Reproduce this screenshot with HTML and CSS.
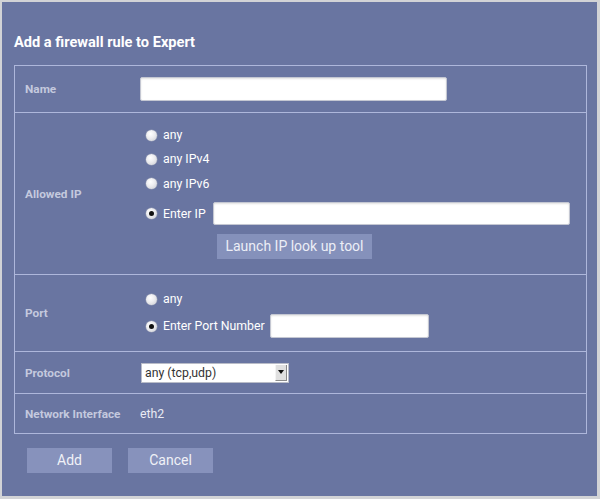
FILE: index.html
```html
<!DOCTYPE html>
<html>
<head>
<meta charset="utf-8">
<link rel="stylesheet" href="styles.css">
</head>
<body>
<div class="panel">
  <div class="title">Add a firewall rule to Expert</div>
  <div class="form">
    <div class="row row-name">
      <div class="label">Name</div>
      <div class="field"><input class="text name-input" type="text"></div>
    </div>
    <div class="row row-ip">
      <div class="label">Allowed IP</div>
      <div class="field col">
        <div class="opt h24 mt10"><span class="radio"></span><span class="opt-text">any</span></div>
        <div class="opt h24"><span class="radio"></span><span class="opt-text">any IPv4</span></div>
        <div class="opt h25"><span class="radio"></span><span class="opt-text">any IPv6</span></div>
        <div class="opt h23 mt6"><span class="radio on"></span><span class="opt-text">Enter IP</span><input class="text ip-input" type="text"></div>
        <div class="launch">Launch IP look up tool</div>
      </div>
    </div>
    <div class="row row-port">
      <div class="label">Port</div>
      <div class="field col">
        <div class="opt h24 mt12"><span class="radio"></span><span class="opt-text">any</span></div>
        <div class="opt h24 mt3"><span class="radio on"></span><span class="opt-text">Enter Port Number</span><input class="text port-input" type="text"></div>
      </div>
    </div>
    <div class="row row-proto">
      <div class="label">Protocol</div>
      <div class="field">
        <div class="select"><span class="select-text">any (tcp,udp)</span><span class="arrow"><span class="tri"></span></span></div>
      </div>
    </div>
    <div class="row row-net">
      <div class="label">Network Interface</div>
      <div class="field"><span class="value">eth2</span></div>
    </div>
  </div>
  <div class="buttons">
    <div class="btn">Add</div>
    <div class="btn">Cancel</div>
  </div>
</div>
</body>
</html>
```

FILE: styles.css
```css
html, body {
  margin: 0;
  padding: 0;
}
body {
  background: #d2d3d6;
  font-family: Roboto, "Liberation Sans", sans-serif;
  width: 600px;
  height: 499px;
  overflow: hidden;
}
.panel {
  margin: 2px 3px 0 2px;
  height: 494px;
  background: #6975a1;
  padding: 30px 0 0 12px;
  box-sizing: border-box;
}
.title {
  height: 20px;
  line-height: 20px;
  font-size: 14.6px;
  font-weight: bold;
  color: #ffffff;
  margin-bottom: 13px;
}
.form {
  width: 573px;
  border: 1px solid #aeb7db;
  box-sizing: border-box;
}
.row {
  display: flex;
  align-items: center;
  border-bottom: 1px solid #aeb7db;
  box-sizing: border-box;
}
.row:last-child {
  border-bottom: none;
}
.row-name { height: 47px; }
.row-ip { height: 162px; }
.row-port { height: 77px; }
.row-proto { height: 42px; }
.row-net { height: 39px; }
.label {
  width: 115px;
  padding-left: 10px;
  flex: none;
  font-size: 11.8px;
  font-weight: bold;
  color: #c4c9de;
}
.field {
  flex: 1;
  display: flex;
  align-items: center;
}
.field.col {
  flex-direction: column;
  align-items: flex-start;
  align-self: stretch;
}
.text {
  display: block;
  margin: 0;
  padding: 0;
  background: #ffffff;
  border: 1px solid #c4c7d2;
  border-radius: 2px;
  box-shadow: inset 0 1px 2px rgba(0,0,0,0.12);
  box-sizing: border-box;
  height: 23px;
}
.name-input { width: 307px; height: 24px; }
.ip-input { width: 357px; margin-left: 7px; }
.port-input { width: 159px; height: 24px; margin-left: 5px; }
.opt {
  display: flex;
  align-items: center;
  padding-left: 6px;
}
.h23 { height: 23px; }
.h24 { height: 24px; }
.h25 { height: 25px; }
.mt3 { margin-top: 3px; }
.mt6 { margin-top: 6px; }
.mt10 { margin-top: 10px; }
.mt12 { margin-top: 12px; }
.radio {
  width: 11px;
  height: 11px;
  border-radius: 50%;
  background: radial-gradient(circle at 40% 35%, #ffffff 0%, #ececef 45%, #c8cad1 100%);
  box-shadow: 0 0 0 0.5px #9aa0b4;
  flex: none;
  position: relative;
}
.radio.on::after {
  content: "";
  position: absolute;
  left: 3px;
  top: 3px;
  width: 5px;
  height: 5px;
  border-radius: 50%;
  background: #111111;
}
.opt-text {
  margin-left: 6px;
  font-size: 12.3px;
  color: #ffffff;
}
.launch {
  margin-top: 9px;
  margin-left: 77px;
  width: 155px;
  height: 25px;
  line-height: 25px;
  background: #8591bb;
  color: #eceef6;
  font-size: 14px;
  text-align: center;
}
.select {
  width: 148px;
  height: 20px;
  margin-left: 1px;
  background: #ffffff;
  border: 1px solid #b9bcc8;
  box-sizing: border-box;
  display: flex;
  align-items: center;
  justify-content: space-between;
}
.select-text {
  font-size: 12.3px;
  color: #333333;
  padding-left: 3px;
}
.arrow {
  width: 12px;
  height: 16px;
  margin-right: 1px;
  background: #e0e0e0;
  border-left: 1px solid #f4f4f4;
  border-bottom: 1px solid #8a8a8a;
  border-right: 1px solid #8a8a8a;
  box-sizing: border-box;
  display: flex;
  align-items: center;
  justify-content: center;
}
.tri {
  width: 0;
  height: 0;
  border-left: 3px solid transparent;
  border-right: 3px solid transparent;
  border-top: 4px solid #111111;
}
.value {
  font-size: 12.3px;
  color: #e9ebf4;
}
.buttons {
  display: flex;
  gap: 16px;
  margin-top: 14px;
  padding-left: 13px;
}
.btn {
  width: 85px;
  height: 25px;
  line-height: 25px;
  background: #8792bc;
  color: #f0f1f7;
  font-size: 14px;
  text-align: center;
}
```
